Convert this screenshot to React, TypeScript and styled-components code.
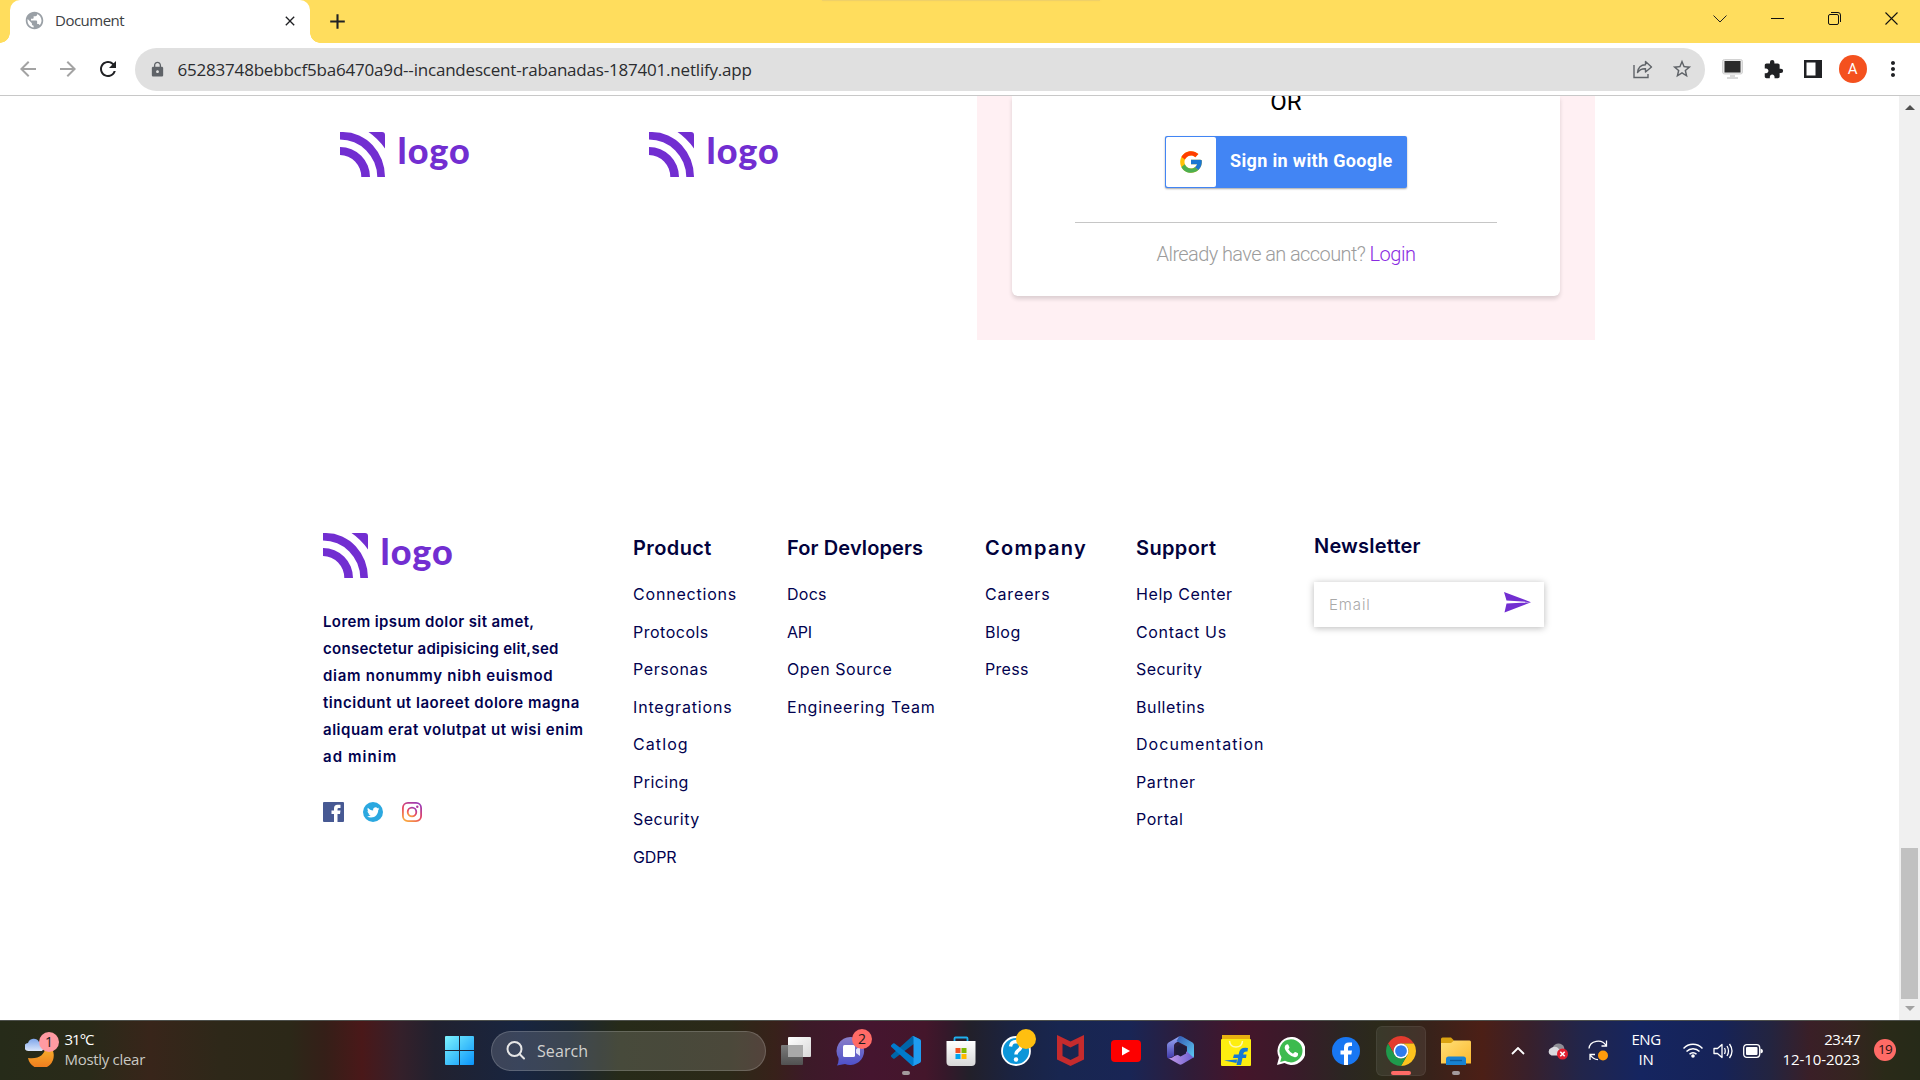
import React from "react";
import styled, { createGlobalStyle } from "styled-components";
import {
  MdArrowBack,
  MdArrowForward,
  MdClose,
  MdExtension,
  MdLock,
  MdMoreVert,
  MdAdd,
  MdPublic,
  MdRefresh,
  MdStarBorder,
} from "react-icons/md";
import { FaTwitter } from "react-icons/fa";
import { FcGoogle } from "react-icons/fc";

const UI = `"Open Sans", "Noto Sans", sans-serif`;
const BODY = `Inter, "Open Sans", sans-serif`;

const Global = createGlobalStyle`
  * { box-sizing: border-box; }
  html, body { margin: 0; padding: 0; }
  body { width: 1920px; height: 1080px; overflow: hidden; background: #fff; font-family: ${UI}; }
  svg { display: block; flex: none; }
`;

const Desktop = styled.div`
  display: flex;
  flex-direction: column;
  width: 1920px;
  height: 1080px;
  overflow: hidden;
`;

/* ---------- browser frame ---------- */

const TabStrip = styled.div`
  position: relative;
  display: flex;
  height: 43px;
  background: #ffdd5d;
`;

const TopShade = styled.div`
  position: absolute;
  left: 822px;
  top: 0;
  width: 278px;
  height: 1px;
  background: #efd068;
  box-shadow: 0 0 2px #f4d160;
`;

const Tab = styled.div`
  position: relative;
  display: flex;
  align-items: center;
  width: 300px;
  height: 43px;
  margin-left: 10px;
  padding: 0 12px 2px 14px;
  border-radius: 10px 10px 0 0;
  background: #fff;
  color: #3c4043;
  &::before,
  &::after {
    content: "";
    position: absolute;
    bottom: 0;
    width: 10px;
    height: 10px;
  }
  &::before {
    left: -10px;
    background: radial-gradient(circle at 0 0, transparent 9.5px, #fff 10px);
  }
  &::after {
    right: -10px;
    background: radial-gradient(circle at 100% 0, transparent 9.5px, #fff 10px);
  }
`;

const TabTitle = styled.span`
  flex: 1;
  margin: -2px 0 0 10px;
  font-size: 15px;
  letter-spacing: -0.5px;
`;

const NewTab = styled.div`
  margin: 9px 0 0 15px;
  color: #202124;
`;

const WindowButtons = styled.div`
  display: flex;
  align-items: center;
  gap: 44px;
  margin-left: auto;
  padding: 0 22px 6px 0;
  height: 43px;
`;

const Toolbar = styled.div`
  display: flex;
  align-items: center;
  height: 53px;
  padding: 0 15px 0 16px;
  border-bottom: 1px solid #c8c8c8;
  background: #fff;
  color: #202124;
`;

const NavButtons = styled.div`
  display: flex;
  align-items: center;
  gap: 16px;
  width: 119px;
`;

const Dim = styled.span`
  color: #a3a3a3;
`;

const Omnibox = styled.div`
  display: flex;
  align-items: center;
  width: 1570px;
  height: 43px;
  padding: 0 12px 0 14px;
  border-radius: 22px;
  background: #e0e0e0;
  color: #5f6368;
`;

const Url = styled.span`
  flex: 1;
  margin-left: 11.5px;
  font-size: 17px;
  letter-spacing: -0.2px;
  color: #2b2c2f;
`;

const OmniIcons = styled.div`
  display: flex;
  align-items: center;
  gap: 18px;
`;

const Extensions = styled.div`
  display: flex;
  align-items: center;
  flex: 1;
  justify-content: space-between;
  padding-left: 17px;
`;

const Avatar = styled.div`
  width: 28px;
  height: 28px;
  margin: 0 -5px 0 -2px;
  border-radius: 50%;
  background: #f4511e;
  color: #fff;
  font: 400 15px/28px Roboto, sans-serif;
  text-align: center;
`;

/* ---------- page ---------- */

const Viewport = styled.div`
  display: flex;
  height: 924px;
  background: #fff;
`;

const Page = styled.main`
  flex: 1;
  overflow: hidden;
`;

const Scrollbar = styled.div`
  display: flex;
  flex-direction: column;
  align-items: center;
  width: 21px;
  padding: 9px 0;
  background: #f0f0f0;
`;

const Thumb = styled.div`
  width: 17px;
  height: 151px;
  margin: auto 0 7px;
  background: #c1c1c1;
`;

const Arrow = styled.i<{ $down?: boolean }>`
  border: 5px solid transparent;
  border-top: ${(p) => (p.$down ? "5px solid #a3a3a3" : "0")};
  border-bottom: ${(p) => (p.$down ? "0" : "5px solid #505050")};
`;

const Hero = styled.section`
  display: flex;
  height: 244px;
  padding-left: 340px;
`;

const Partners = styled.div`
  display: flex;
  gap: 179px;
  width: 637px;
  padding-top: 36px;
`;

const Pink = styled.div`
  width: 618px;
  padding: 0 35px;
  background: #fff0f3;
`;

const Card = styled.div`
  display: flex;
  flex-direction: column;
  align-items: center;
  height: 200px;
  border-radius: 0 0 6px 6px;
  background: #fff;
  box-shadow: 0 3px 4px rgba(0, 0, 0, 0.14);
  font-family: Roboto, sans-serif;
`;

const Or = styled.div`
  height: 28px;
  margin: -8px 0 20px;
  font-size: 24px;
  line-height: 28px;
`;

const GoogleButton = styled.div`
  display: flex;
  align-items: center;
  width: 242px;
  height: 52px;
  padding: 1px;
  border-radius: 2px;
  background: #4285f4;
  box-shadow: 0 1px 2px rgba(0, 0, 0, 0.35);
  color: #fff;
  font-size: 18px;
  line-height: 20px;
  font-weight: 700;
  letter-spacing: 0.35px;
  white-space: nowrap;
`;

const GoogleLabel = styled.span`
  padding-bottom: 2px;
`;

const GoogleBadge = styled.span`
  display: grid;
  place-items: center;
  width: 50px;
  height: 50px;
  margin-right: 14px;
  border-radius: 2px;
  background: #fff;
`;

const Rule = styled.div`
  width: 422px;
  height: 1px;
  margin-top: 34px;
  background: #c6c6c6;
`;

const Already = styled.div`
  margin-top: 17px;
  color: #9c9c9c;
  font-size: 20px;
  line-height: 28px;
  font-weight: 300;
  letter-spacing: -0.6px;
`;

const Login = styled.span`
  color: #8a2be2;
  letter-spacing: -0.5px;
`;

const Footer = styled.footer`
  display: grid;
  grid-template-columns: 310px 154px 198px 151px 178px 1fr;
  padding: 193px 0 0 323px;
  font-family: ${BODY};
  color: #02024f;
`;

const LogoRow = styled.div`
  display: flex;
  width: 130px;
  height: 45px;
`;

const LogoWord = styled.span`
  margin-left: 12.5px;
  color: #722ed1;
  font: 900 36px/37px Lato, sans-serif;
  letter-spacing: 1px;
  white-space: nowrap;
`;

const Blurb = styled.div`
  margin-top: 30px;
  font-size: 15px;
  line-height: 27px;
  font-weight: 600;
`;

const Line = styled.div<{ $track: number }>`
  letter-spacing: ${(p) => p.$track}px;
  white-space: nowrap;
`;

const Socials = styled.div`
  display: flex;
  align-items: center;
  gap: 19px;
  margin-top: 32px;
`;

const Heading = styled.h4<{ $track: number; $lift?: boolean }>`
  margin: ${(p) => (p.$lift ? "-2px 0 0" : "0 0 13px")};
  font-size: 20px;
  line-height: 30px;
  font-weight: 600;
  letter-spacing: ${(p) => p.$track}px;
  color: #02023c;
  white-space: nowrap;
`;

const FootLink = styled(Line)`
  font-size: 16px;
  line-height: 37.5px;
`;

const EmailBox = styled.div`
  display: flex;
  justify-content: space-between;
  width: 230px;
  height: 45px;
  margin-top: 21px;
  padding: 10px 13px 0 15px;
  background: #fff;
  box-shadow: 0 1px 7px rgba(0, 0, 0, 0.28);
`;

const Placeholder = styled.span`
  color: #a9a9a9;
  font-size: 15px;
  line-height: 26px;
  font-weight: 300;
  letter-spacing: 0.9px;
`;

/* ---------- taskbar ---------- */

const Taskbar = styled.div`
  display: flex;
  align-items: center;
  height: 60px;
  border-top: 1px solid #4d504c;
  color: #fff;
  background: linear-gradient(
    90deg,
    #262b19 0, #2a2a19 90px, #38251a 150px, #2e2819 220px, #2c2818 290px, #351f18 325px,
    #4a1819 362px, #35202a 400px, #21212f 435px, #182540 520px, #1b2633 570px, #272b19 620px,
    #2c2918 730px, #38211a 775px, #3c1a28 805px, #45152f 870px, #44162b 925px, #36182a 945px,
    #22202a 970px, #1b2340 1010px, #182650 1060px, #192555 1130px, #301c38 1190px,
    #45152a 1240px, #3a1a2a 1290px, #2b2622 1345px, #2c2a1a 1380px, #38221a 1430px,
    #4c1f16 1482px, #38202c 1530px, #22254a 1580px, #152560 1640px, #162358 1720px,
    #232440 1770px, #3a1f27 1810px, #352420 1850px, #2a2a18 1885px, #262a18 1920px
  );
`;

const Weather = styled.div`
  display: flex;
  align-items: center;
  width: 432px;
  padding-left: 25px;
`;

const TwoLines = styled.div<{ $align?: string }>`
  padding-bottom: 4px;
  font-size: 15px;
  line-height: 20px;
  text-align: ${(p) => p.$align ?? "left"};
`;

const Row = styled.div<{ $track: number; $soft?: boolean }>`
  letter-spacing: ${(p) => p.$track}px;
  color: ${(p) => (p.$soft ? "#c9c8c3" : "#fff")};
  white-space: nowrap;
`;

const Slot = styled.div<{ $active?: boolean }>`
  position: relative;
  display: grid;
  place-items: center;
  width: ${(p) => (p.$active ? 50 : 55)}px;
  height: 50px;
  margin: ${(p) => (p.$active ? "0 2.5px" : "0")};
  border-radius: 6px;
  background: ${(p) => (p.$active ? "rgba(255,255,255,.07)" : "none")};
  box-shadow: ${(p) => (p.$active ? "inset 0 0 0 1px rgba(255,255,255,.06)" : "none")};
`;

const Marker = styled.i<{ $wide?: boolean }>`
  position: absolute;
  bottom: 1px;
  left: 50%;
  width: ${(p) => (p.$wide ? 20 : 8)}px;
  height: 4px;
  border-radius: 2px;
  transform: translateX(-50%);
  background: ${(p) => (p.$wide ? "#ff6b66" : "#a39a9d")};
`;

const Badge = styled.span<{ $bg: string; $x: number; $y: number }>`
  position: absolute;
  left: ${(p) => p.$x}px;
  top: ${(p) => p.$y}px;
  width: 20px;
  height: 20px;
  border-radius: 50%;
  background: ${(p) => p.$bg};
  color: #1b1b1b;
  font-size: 14px;
  line-height: 20px;
  text-align: center;
`;

const WeatherIcon = styled.div`
  position: relative;
  width: 39.5px;
  height: 34px;
  margin-top: -2px;
`;

const SearchBox = styled.div`
  display: flex;
  align-items: center;
  width: 275px;
  height: 40px;
  margin: 0 2.5px 0 3.5px;
  padding-left: 14px;
  border: 1px solid rgba(255, 255, 255, 0.17);
  border-radius: 20px;
  background: rgba(255, 255, 255, 0.15);
`;

const SearchText = styled.span`
  margin: 0 0 0 12.5px;
  color: #d2d2cf;
  font-size: 16px;
  letter-spacing: 0.1px;
`;

const Tray = styled.div`
  display: flex;
  align-items: center;
  flex: 1;
  padding: 0 24px 0 28px;
`;

const Gap = styled.span<{ $w: number }>`
  flex: none;
  width: ${(p) => p.$w}px;
`;

const Count = styled.span`
  width: 22px;
  height: 22px;
  margin: -1px 0 0 auto;
  border-radius: 50%;
  background: #ff6b66;
  color: #2a1212;
  font-size: 13.5px;
  line-height: 21px;
  letter-spacing: -0.8px;
  text-align: center;
`;

/* ---------- drawings ---------- */

const Logo = () => (
  <LogoRow>
    <svg width="45" height="45" viewBox="0 0 45 45" fill="#722ed1">
      <path d="M0 0H3A42 45 0 0 1 45 45H37.3A37.3 38 0 0 0 0 7.4Z" />
      <path d="M0 15A30 30 0 0 1 30 45H21.3A21.3 22 0 0 0 0 23Z" />
      <path d="M28.5 0H42Q45 0 45 3V16.500Q38 6.500 28.500 0Z" />
    </svg>
    <LogoWord>logo</LogoWord>
  </LogoRow>
);

const VsCode = () => (
  <svg width="30" height="30" viewBox="0 0 100 100">
    <path fill="#0065a9" d="M96.500 10.800L75.900.9a6.200 6.200 0 0 0-7.100 1.200L1.300 63.600a4.200 4.200 0 0 0 0 6.200l5.500 5a4.200 4.200 0 0 0 5.300.2L93.400 13.400C96.100 11.300 100 13.300 100 16.700v-.2a6.200 6.200 0 0 0-3.500-5.700z" />
    <path fill="#007acc" d="M96.500 89.200L75.900 99.100a6.200 6.200 0 0 1-7.100-1.200L1.300 36.400a4.200 4.200 0 0 1 0-6.200l5.500-5a4.200 4.200 0 0 1 5.300-.2l81.200 61.600c2.700 2.100 6.600.1 6.600-3.300v.2a6.200 6.200 0 0 1-3.400 5.700z" />
    <path fill="#1f9cf0" d="M75.900 99.100a6.200 6.200 0 0 1-7.100-1.200C71.100 100.200 75 98.600 75 95.300V4.700C75 1.400 71.100-.2 68.800 2.100a6.200 6.200 0 0 1 7.100-1.200l20.600 9.900a6.200 6.200 0 0 1 3.500 5.600v67.200a6.200 6.200 0 0 1-3.500 5.600z" />
  </svg>
);

const Chrome = () => (
  <svg width="30" height="30" viewBox="0 0 48 48">
    <path fill="#e33b2e" d="M24 12L44.780 12A24 24 0 0 0 3.220 12L13.610 30A12 12 0 0 1 24 12Z" />
    <path fill="#fcc31e" d="M34.390 30L24 48A24 24 0 0 0 44.780 12L24 12A12 12 0 0 1 34.390 30Z" />
    <path fill="#1f9a4c" d="M13.610 30L3.220 12A24 24 0 0 0 24 48L34.390 30A12 12 0 0 1 13.610 30Z" />
    <circle cx="24" cy="24" r="12" fill="#fff" />
    <circle cx="24" cy="24" r="9.400" fill="#2f7bee" />
  </svg>
);

const StartIcon = () => (
  <svg width="29" height="29" viewBox="0 0 29 29">
    <defs>
      <linearGradient id="win" x1="0" y1="0" x2="29" y2="29" gradientUnits="userSpaceOnUse">
        <stop stopColor="#7df3ff" />
        <stop offset=".5" stopColor="#43c4fb" />
        <stop offset="1" stopColor="#0a93fb" />
      </linearGradient>
    </defs>
    <path fill="url(#win)" d="M1 0H14V14H0V1Q0 0 1 0ZM15 0H28Q29 0 29 1V14H15ZM0 15H14V29H1Q0 29 0 28ZM15 15H29V28Q29 29 28 29H15Z" />
  </svg>
);

const TaskView = () => (
  <svg width="30" height="28" viewBox="0 0 30 28">
    <defs>
      <linearGradient id="tvb" x1="0" y1="0" x2="0" y2="1">
        <stop stopColor="#7b7b7b" />
        <stop offset="1" stopColor="#515151" />
      </linearGradient>
      <linearGradient id="tvf" x1="0" y1="0" x2="1" y2="1">
        <stop stopColor="#fff" />
        <stop offset="1" stopColor="#d8d8d8" />
      </linearGradient>
    </defs>
    <rect x="0" y="8" width="22" height="20" rx="1" fill="url(#tvb)" />
    <rect x="7" y="0" width="23" height="20" rx="1" fill="url(#tvf)" />
    <rect x="7" y="8" width="15" height="12" fill="#a9a9a9" />
  </svg>
);

const Chat = () => (
  <svg width="30" height="30" viewBox="0 0 30 30">
    <defs>
      <linearGradient id="chat" x1="0" y1="0" x2="0" y2="1">
        <stop stopColor="#8a7fc9" />
        <stop offset="1" stopColor="#4d50c9" />
      </linearGradient>
    </defs>
    <path fill="url(#chat)" d="M15 1A14 14 0 1 1 9 28L1 29.500Q3 26 2.500 22A14 14 0 0 1 15 1Z" />
    <rect x="7" y="9" width="12" height="12" rx="1.500" fill="#fff" />
    <path fill="#e3e3fa" d="M20 13.500L24 10V20L20 17Z" />
  </svg>
);

const Store = () => (
  <svg width="30" height="30" viewBox="0 0 30 30">
    <defs>
      <linearGradient id="bag" x1="0" y1="0" x2="0" y2="1">
        <stop stopColor="#fff" />
        <stop offset="1" stopColor="#d8d8d8" />
      </linearGradient>
    </defs>
    <path d="M8.500 6V2.500Q8.500 1.500 9.500 1.500H20.500Q21.500 1.500 21.500 2.500V6" fill="none" stroke="#1fb0ee" strokeWidth="1.800" />
    <path fill="url(#bag)" d="M.5 5H29.500V26Q29.500 30 25.500 30H4.500Q.5 30 .5 26Z" />
    <path fill="#f25022" d="M9.500 12H14.500V17H9.500Z" />
    <path fill="#7fba00" d="M15.500 12H20.500V17H15.500Z" />
    <path fill="#00a4ef" d="M9.500 18H14.500V23H9.500Z" />
    <path fill="#ffb900" d="M15.500 18H20.500V23H15.500Z" />
  </svg>
);

const Help = () => (
  <svg width="30" height="30" viewBox="0 0 30 30">
    <circle cx="15" cy="15" r="14" fill="#0d96d9" stroke="#fff" strokeWidth="1.800" />
    <path d="M9.500 10.500Q10 5.500 15.500 5.500Q20 6 20 10Q20 12.500 17.500 14.200Q15 15.800 15 18.500" fill="none" stroke="#fff" strokeWidth="3.400" />
    <circle cx="15" cy="23.500" r="2.200" fill="#fff" />
  </svg>
);

const McAfee = () => (
  <svg width="27" height="31" viewBox="0 0 27 31">
    <path fill="#c52b2d" d="M0 0L13.500 6.500L27 0V24.500L13.500 31L0 24.500ZM5.500 8.500V21L13.500 25L21.500 21V8.500L13.500 12.500Z" fillRule="evenodd" />
  </svg>
);

const YouTube = () => (
  <svg width="30" height="22" viewBox="0 0 30 22">
    <rect width="30" height="22" rx="4" fill="#fd0000" />
    <path fill="#fff" d="M11 6.500V15.500L19 11Z" />
  </svg>
);

const M365 = () => (
  <svg width="27" height="29" viewBox="0 0 27 29">
    <defs>
      <linearGradient id="ma" x1="0" y1="0" x2="0" y2="1">
        <stop stopColor="#9aaaf5" />
        <stop offset="1" stopColor="#4038a8" />
      </linearGradient>
      <linearGradient id="mb" x1="0" y1="0" x2="1" y2="1">
        <stop stopColor="#3355b0" />
        <stop offset="1" stopColor="#5ccdf5" />
      </linearGradient>
      <linearGradient id="mc" x1="0" y1="0" x2="1" y2="0">
        <stop stopColor="#c79be8" />
        <stop offset="1" stopColor="#6a5fd0" />
      </linearGradient>
    </defs>
    <path fill="url(#ma)" d="M12 .5L1.500 6.500Q0 7.500 0 9V20Q0 22 1.500 22.500L7 20V9.500Q7 8 8.500 7L17 2Z" />
    <path fill="url(#mb)" d="M12 .5Q13.500-.3 15 .5L25.500 6.500Q27 7.500 27 9V20Q27 21.500 26 22L20 18V10.500L9.500 5Z" />
    <path fill="url(#mc)" d="M1 22Q4 23 7.500 20L20 15.500L26.500 21.500L15 28.300Q13.500 29.200 12 28.300Z" />
    <path fill="#201c3a" d="M13.500 8.500L19 11.500V17.500L13.500 20.500L8.500 17.500V11.500Z" />
  </svg>
);

const Flipkart = () => (
  <svg width="30" height="31" viewBox="0 0 30 31">
    <path fill="#e9b010" d="M1 0H29V5H1Z" />
    <rect y="4" width="30" height="27" rx="1" fill="#fdee10" />
    <path d="M8.500 6Q9 12 15 12T21.500 6" fill="none" stroke="#fff8b0" strokeWidth="1.500" />
    <path fill="#1478d4" d="M27 13Q19 11.500 18 18L17.700 19.500H13L12 23H17L15.500 30H20L21.500 23H25L25.500 19.500H22.200Q22.500 16 26.500 16.500Z" />
    <path fill="#1478d4" d="M3 25.500L16 24.500L15.500 28Z" />
  </svg>
);

const WhatsApp = () => (
  <svg width="28" height="28" viewBox="0 0 28 28">
    <path fill="#fff" d="M14 0A14 14 0 1 1 7.500 26L0 28L2 20.500A14 14 0 0 1 14 0Z" />
    <path fill="#3dbb4f" d="M14 2.200A11.600 11.600 0 1 1 8 23.800L3.200 25L4.500 20.300A11.600 11.600 0 0 1 14 2.200Z" />
    <path fill="#fff" d="M9.500 7.500Q11 6.700 11.600 8.200L12.500 10.500Q12.500 11.300 11.300 12.300Q13 15.600 16 16.800L17.600 15.200Q18.200 14.800 19 15.200L21 16.300Q21.500 19.600 18.300 20.200Q15.500 20.500 11.500 17Q7.500 13 7.700 10.300Q7.900 8.300 9.500 7.500Z" />
  </svg>
);

const FacebookRound = () => (
  <svg width="28" height="28" viewBox="0 0 28 28">
    <circle cx="14" cy="14" r="14" fill="#1877f2" />
    <path fill="#fff" d="M12 28V17.500H8.500V13.500H12V10.500Q12 5.500 17 5.500H20V9H18Q16 9 16 11V13.500H20L19.300 17.500H16V28Z" />
  </svg>
);

const Explorer = () => (
  <svg width="30" height="28" viewBox="0 0 30 28">
    <defs>
      <linearGradient id="fold" x1="0" y1="0" x2="1" y2="1">
        <stop stopColor="#ffdf77" />
        <stop offset="1" stopColor="#fbb92f" />
      </linearGradient>
    </defs>
    <path fill="#dba211" d="M0 2Q0 .5 1.500.5H10L13 3.500V9H0Z" />
    <path fill="url(#fold)" d="M0 6H10L13 3.500H28.500Q30 3.500 30 5V26.500H0Z" />
    <path fill="#1782d2" d="M5 28V22Q5 19.500 7.500 19.500H22.500Q25 19.500 25 22V28Z" />
    <path d="M9 23.500H21" stroke="#0c5a9c" strokeWidth="1.300" />
  </svg>
);

const FacebookSquare = () => (
  <svg width="21" height="20" viewBox="0 0 21 20">
    <rect width="21" height="20" rx="1" fill="#475993" />
    <path fill="#fff" d="M11 20V12H8.500V8.500H11V6.500Q11 2.800 14.500 2.800H17.500V6H15.700Q14.500 6 14.500 7.300V8.500H17.500L17 12H14.500V20Z" />
  </svg>
);

const TwitterRound = () => (
  <svg width="20" height="20" viewBox="0 0 20 20">
    <circle cx="10" cy="10" r="10" fill="#2ba8e0" />
    <g transform="translate(4 4.200)">
      <FaTwitter size={12.5} color="#fff" />
    </g>
  </svg>
);

const Instagram = () => (
  <svg width="20" height="20" viewBox="0 0 20 20">
    <defs>
      <linearGradient id="ig" x1=".2" y1="1" x2=".8" y2="0">
        <stop stopColor="#f9a63f" />
        <stop offset=".45" stopColor="#e8475f" />
        <stop offset="1" stopColor="#9a3ab5" />
      </linearGradient>
    </defs>
    <g fill="none" stroke="url(#ig)" strokeWidth="1.800">
      <rect x=".9" y=".9" width="18.200" height="18.200" rx="5" />
      <circle cx="10" cy="10" r="4.300" />
    </g>
    <circle cx="15.300" cy="4.800" r="1.200" fill="#b03aa0" />
  </svg>
);

/* ---------- data ---------- */

type Item = [text: string, track: number];

const columns: { title: Item; links: Item[] }[] = [
  {
    title: ["Product", 0.4],
    links: [
      ["Connections", 0.8], ["Protocols", 0.5], ["Personas", 0.6], ["Integrations", 0.83],
      ["Catlog", 1.1], ["Pricing", 0.45], ["Security", 0.48], ["GDPR", -0.15],
    ],
  },
  {
    title: ["For Devlopers", 0.12],
    links: [["Docs", 0.25], ["API", -0.3], ["Open Source", 0.59], ["Engineering Team", 0.76]],
  },
  { title: ["Company", 1.35], links: [["Careers", 0.85], ["Blog", 0.5], ["Press", 0.3]] },
  {
    title: ["Support", 0.38],
    links: [
      ["Help Center", 0.58], ["Contact Us", 0.65], ["Security", 0.45], ["Bulletins", 0.6],
      ["Documentation", 1.04], ["Partner", 0.6], ["Portal", 0.55],
    ],
  },
];

const blurb: Item[] = [
  ["Lorem ipsum dolor sit amet,", 0.39],
  ["consectetur adipisicing elit,sed", 0.28],
  ["diam nonummy nibh euismod", 0.7],
  ["tincidunt ut laoreet dolore magna", 0.53],
  ["aliquam erat volutpat ut wisi enim", 0.52],
  ["ad minim", 1.05],
];

export default function App() {
  return (
    <Desktop>
      <Global />
      <TabStrip>
        <TopShade />
        <Tab>
          <MdPublic size={21} color="#9aa0a6" />
          <TabTitle>Document</TabTitle>
          <MdClose size={16} color="#202124" />
        </Tab>
        <NewTab>
          <MdAdd size={25} />
        </NewTab>
        <WindowButtons>
          <svg width="14" height="8" viewBox="0 0 14 8" fill="none" stroke="#222"><path d="M.5.5L7 7L13.500.5" /></svg>
          <svg width="13" height="13" viewBox="0 0 13 13" stroke="#111"><path d="M0 6.500H13" /></svg>
          <svg width="13" height="13" viewBox="0 0 13 13" fill="none" stroke="#111">
            <rect x=".5" y="2.500" width="10" height="10" rx="1.500" />
            <path d="M3 .5H10Q12.500.5 12.500 3V10" />
          </svg>
          <svg width="13" height="13" viewBox="0 0 13 13" stroke="#111" strokeWidth="1.100"><path d="M.5.5L12.500 12.500M12.500.5L.5 12.500" /></svg>
        </WindowButtons>
      </TabStrip>
      <Toolbar>
        <NavButtons>
          <Dim><MdArrowBack size={24} /></Dim>
          <Dim><MdArrowForward size={24} /></Dim>
          <MdRefresh size={24} />
        </NavButtons>
        <Omnibox>
          <MdLock size={17} />
          <Url>65283748bebbcf5ba6470a9d--incandescent-rabanadas-187401.netlify.app</Url>
          <OmniIcons>
            <svg width="20" height="19" viewBox="0 0 20 19" fill="none" stroke="#5f6368" strokeWidth="1.400">
              <path d="M1 5V17.500H15V14" />
              <path d="M4.500 12.500Q5.500 5 12.500 4.800V1.500L18.500 7L12.500 12V8.800Q7.500 8.500 4.500 12.500Z" strokeLinejoin="round" />
            </svg>
            <MdStarBorder size={22} />
          </OmniIcons>
        </Omnibox>
        <Extensions>
          <svg width="22" height="21" viewBox="0 0 22 21">
            <rect x=".5" y=".5" width="20" height="14.500" rx="2" fill="#e6e6e6" stroke="#d2d2d2" />
            <rect x="2.500" y="2" width="16" height="11.500" fill="#2b2b2b" />
            <path d="M8 16H13V18H16V20H5V18H8Z" fill="#d9d9d9" />
          </svg>
          <MdExtension size={21} />
          <svg width="18" height="18" viewBox="0 0 18 18">
            <path fill="#202124" fillRule="evenodd" d="M0 0H18V18H0ZM2.500 2.500V15.500H11.500V2.500Z" />
          </svg>
          <Avatar>A</Avatar>
          <MdMoreVert size={24} />
        </Extensions>
      </Toolbar>

      <Viewport>
        <Page>
          <Hero>
            <Partners>
              <Logo />
              <Logo />
            </Partners>
            <Pink>
              <Card>
                <Or>OR</Or>
                <GoogleButton>
                  <GoogleBadge><FcGoogle size={26} /></GoogleBadge>
                  <GoogleLabel>Sign in with Google</GoogleLabel>
                </GoogleButton>
                <Rule />
                <Already>
                  Already have an account? <Login>Login</Login>
                </Already>
              </Card>
            </Pink>
          </Hero>
          <Footer>
            <div>
              <Logo />
              <Blurb>
                {blurb.map(([text, track]) => (
                  <Line key={text} $track={track}>{text}</Line>
                ))}
              </Blurb>
              <Socials>
                <FacebookSquare />
                <TwitterRound />
                <Instagram />
              </Socials>
            </div>
            {columns.map(({ title, links }) => (
              <div key={title[0]}>
                <Heading $track={title[1]}>{title[0]}</Heading>
                {links.map(([text, track]) => (
                  <FootLink key={text} $track={track}>{text}</FootLink>
                ))}
              </div>
            ))}
            <div>
              <Heading $track={0.2} $lift>Newsletter</Heading>
              <EmailBox>
                <Placeholder>Email</Placeholder>
                <svg width="27" height="21" viewBox="0 0 27 21" fill="#722ed1">
                  <path d="M0 0L27 10.200L2.500 8.600ZM27 10.200L.5 20.500L2.500 11.600Z" />
                </svg>
              </EmailBox>
            </div>
          </Footer>
        </Page>
        <Scrollbar>
          <Arrow />
          <Thumb />
          <Arrow $down />
        </Scrollbar>
      </Viewport>

      <Taskbar>
        <Weather>
          <WeatherIcon>
            <svg width="30" height="34" viewBox="0 0 30 34">
              <defs>
                <linearGradient id="moon" x1="0" y1="0" x2="0" y2="1">
                  <stop stopColor="#f8b62c" />
                  <stop offset="1" stopColor="#ef7a1e" />
                </linearGradient>
                <linearGradient id="cloud" x1="0" y1="0" x2="0" y2="1">
                  <stop stopColor="#7fa6ea" />
                  <stop offset="1" stopColor="#dbe6fb" />
                </linearGradient>
              </defs>
              <path fill="url(#moon)" d="M27 16A13 13 0 1 1 3 25Q19 27 21 13Z" />
              <path fill="url(#cloud)" d="M4 18A4 4 0 0 1 3 10A6 6 0 0 1 14 9A5 5 0 0 1 17 18Z" />
            </svg>
            <Badge $bg="#ff9aa2" $x={14} $y={-1}>1</Badge>
          </WeatherIcon>
          <TwoLines>
            <Row $track={-1}>31°C</Row>
            <Row $track={-0.3} $soft>Mostly clear</Row>
          </TwoLines>
        </Weather>
        <Slot><StartIcon /></Slot>
        <SearchBox>
          <svg width="19" height="19" viewBox="0 0 19 19" fill="none" stroke="#e6e6e6" strokeWidth="2" strokeLinecap="round">
            <circle cx="8.500" cy="8" r="7" />
            <path d="M13.500 13L18 17.500" />
          </svg>
          <SearchText>Search</SearchText>
        </SearchBox>
        <Slot><TaskView /></Slot>
        <Slot><Chat /><Badge $bg="#ff6b66" $x={29} $y={3}>2</Badge></Slot>
        <Slot><VsCode /><Marker /></Slot>
        <Slot><Store /></Slot>
        <Slot><Help /><Badge $bg="#ffbf10" $x={28} $y={3} /></Slot>
        <Slot><McAfee /></Slot>
        <Slot><YouTube /></Slot>
        <Slot><M365 /></Slot>
        <Slot><Flipkart /></Slot>
        <Slot><WhatsApp /></Slot>
        <Slot><FacebookRound /></Slot>
        <Slot $active><Chrome /><Marker $wide /></Slot>
        <Slot><Explorer /><Marker /></Slot>
        <Tray>
          <svg width="14" height="8" viewBox="0 0 14 8" fill="none" stroke="#fff" strokeWidth="1.800"><path d="M1 7L7 1L13 7" /></svg>
          <Gap $w={23} />
          <svg width="21" height="18" viewBox="0 0 21 18">
            <path fill="#8f8f96" d="M5 5A6 6 0 0 1 16 5L17 10H5Z" />
            <path fill="#d9d9de" d="M3.500 13.500A4 4 0 0 1 3 6Q8 3 11 7L15 13.500Z" />
            <circle cx="14.500" cy="12" r="5.500" fill="#e11f2f" />
            <path d="M12.300 9.800L16.700 14.200M16.700 9.800L12.300 14.200" stroke="#fff" strokeWidth="1.600" />
          </svg>
          <Gap $w={19} />
          <svg width="21" height="21" viewBox="0 0 21 21" fill="none" stroke="#fff" strokeWidth="1.300">
            <path d="M1 8.500A9 8 0 0 1 18 5.500M18.500.5V6H13.500" />
            <path d="M2 20V14.500H7M2 14.500Q5 19.500 10 19.700" />
            <circle cx="15" cy="15.500" r="5" fill="#ff9c0a" stroke="none" />
          </svg>
          <Gap $w={22.5} />
          <TwoLines $align="center">
            <Row $track={-0.5}>ENG</Row>
            <Row $track={-0.3}>IN</Row>
          </TwoLines>
          <Gap $w={22} />
          <svg width="20" height="15" viewBox="0 0 20 15" fill="none" stroke="#fff" strokeWidth="1.500">
            <path d="M.5 5.500A13 13 0 0 1 19.500 5.500M3.500 8.500A9 9 0 0 1 16.500 8.500M6.500 11.300A5 5 0 0 1 13.500 11.300" />
            <circle cx="10" cy="13" r="1.800" fill="#fff" stroke="none" />
          </svg>
          <Gap $w={10} />
          <svg width="20" height="16" viewBox="0 0 20 16" fill="none" stroke="#fff" strokeWidth="1.300">
            <path d="M1 5.500H4.500L9 1.500V14.500L4.500 10.500H1Z" strokeLinejoin="round" />
            <path d="M11.500 5Q13 8 11.500 11M14 3Q17 8 14 13M16.500 1Q21.500 8 16.500 15" />
          </svg>
          <Gap $w={10} />
          <svg width="20" height="14" viewBox="0 0 20 14">
            <rect x=".7" y=".7" width="16" height="12.600" rx="3" fill="none" stroke="#fff" strokeWidth="1.300" />
            <rect x="3" y="3" width="11.500" height="8" rx="1" fill="#fff" />
            <path d="M17.500 4.500Q20 5 20 7T17.500 9.500Z" fill="#fff" />
          </svg>
          <Gap $w={20} />
          <TwoLines $align="right">
            <Row $track={-0.45}>23:47</Row>
            <Row $track={-0.07}>12-10-2023</Row>
          </TwoLines>
          <Count>19</Count>
        </Tray>
      </Taskbar>
    </Desktop>
  );
}
